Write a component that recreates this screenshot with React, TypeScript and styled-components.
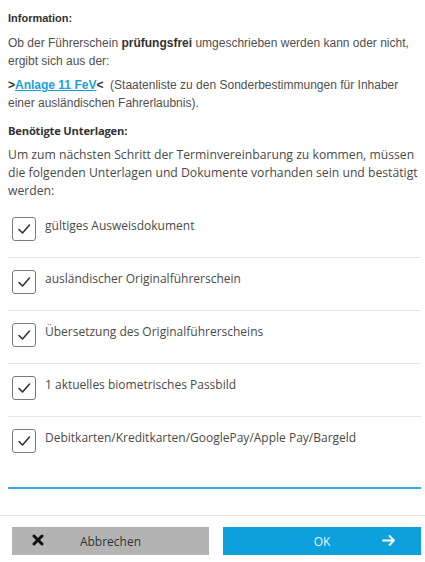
import React from 'react'
import styled, { createGlobalStyle } from 'styled-components'

const GlobalStyle = createGlobalStyle`
  body {
    margin: 0;
    background: #fff;
    color: #444;
  }
`

const Page = styled.div`
  width: 425px;
  height: 562px;
  display: flex;
  flex-direction: column;
  background: #fff;
`

const Content = styled.div`
  padding: 9px 4px 0 8px;
  flex: 1;
`

const InfoTitle = styled.div`
  font-family: "Liberation Sans", Arial, sans-serif;
  font-size: 11px;
  font-weight: bold;
  line-height: 18px;
  color: #333;
`

const InfoText = styled.p`
  font-family: "Liberation Sans", Arial, sans-serif;
  font-size: 12px;
  line-height: 18px;
  color: #505050;
  margin: ${p => p.$top}px 0 0;
  & b {
    color: #333;
  }
`

const LinkArrow = styled.b`
  color: #333;
`

const Link = styled.a`
  color: #1a9fe0;
  font-weight: bold;
  text-decoration: underline;
`

const SectionTitle = styled.div`
  font-family: "Open Sans", sans-serif;
  font-size: 11.2px;
  font-weight: 700;
  line-height: 18px;
  letter-spacing: -0.2px;
  color: #333;
  margin-top: 10px;
`

const SectionText = styled.p`
  font-family: "Open Sans", sans-serif;
  font-size: 12.2px;
  line-height: 18px;
  letter-spacing: 0;
  color: #4a4a4a;
  margin: 6px 0 0;
`

const List = styled.ul`
  list-style: none;
  margin: 5px 0 0;
  padding: 0;
`

const Row = styled.li`
  display: flex;
  align-items: flex-start;
  gap: 9px;
  padding: 12px 0 16px 4px;
  border-bottom: ${p => (p.$last ? 'none' : '1px solid #e6e6e6')};
`

const Box = styled.span`
  width: 22px;
  height: 22px;
  flex: none;
  border: 1px solid #7a7a7a;
  border-radius: 3px;
  display: flex;
  align-items: center;
  justify-content: center;
`

const Label = styled.span`
  font-family: "Open Sans", sans-serif;
  font-size: 12px;
  line-height: 18px;
  letter-spacing: 0;
  color: #4a4a4a;
`

const BlueLine = styled.div`
  height: 2px;
  background: #33aaea;
  margin-top: 18px;
`

const Footer = styled.div`
  border-top: 1px solid #e4e4e4;
  display: grid;
  grid-template-columns: 197px 198px;
  gap: 14px;
  padding: 11px 4px 7px 12px;
`

const Button = styled.button`
  height: 28px;
  border: none;
  border-radius: 0;
  background: ${p => (p.$primary ? '#0ca0dd' : '#b3b3b3')};
  color: ${p => (p.$primary ? '#e8f6fd' : '#333')};
  font-family: "Open Sans", sans-serif;
  font-size: 12px;
  position: relative;
  display: flex;
  align-items: center;
  justify-content: center;
  padding: 0;
`

const ButtonIcon = styled.span`
  position: absolute;
  top: 7px;
  ${p => (p.$right ? 'right: 25px;' : 'left: 20px;')}
  display: flex;
`

const Check = () => (
  <svg width="14" height="12" viewBox="0 0 14 12">
    <path d="M2 6.5 L5.5 10 L12.5 2" fill="none" stroke="#333" strokeWidth="1.6" strokeLinecap="round" strokeLinejoin="round" />
  </svg>
)

const items = [
  'gültiges Ausweisdokument',
  'ausländischer Originalführerschein',
  'Übersetzung des Originalführerscheins',
  '1 aktuelles biometrisches Passbild',
  'Debitkarten/Kreditkarten/GooglePay/Apple Pay/Bargeld',
]

export default function App() {
  return (
    <Page>
      <GlobalStyle />
      <Content>
        <InfoTitle>Information:</InfoTitle>
        <InfoText $top={7}>
          Ob der Führerschein <b>prüfungsfrei</b> umgeschrieben werden kann oder nicht, ergibt sich aus der:
        </InfoText>
        <InfoText $top={6}>
          <LinkArrow>&gt;</LinkArrow>
          <Link href="#">Anlage 11 FeV</Link>
          <LinkArrow>&lt;</LinkArrow>&nbsp; (Staatenliste zu den Sonderbestimmungen für Inhaber einer ausländischen Fahrerlaubnis).
        </InfoText>
        <SectionTitle>Benötigte Unterlagen:</SectionTitle>
        <SectionText>
          Um zum nächsten Schritt der Terminvereinbarung zu kommen, müssen die folgenden Unterlagen und Dokumente vorhanden sein und bestätigt werden:
        </SectionText>
        <List>
          {items.map((t, i) => (
            <Row key={t} $last={i === items.length - 1}>
              <Box>
                <Check />
              </Box>
              <Label>{t}</Label>
            </Row>
          ))}
        </List>
        <BlueLine />
      </Content>
      <Footer>
        <Button>
          <ButtonIcon>
            <svg width="12" height="12" viewBox="0 0 12 12">
              <path d="M2 2 L10 10 M10 2 L2 10" stroke="#111" strokeWidth="3" strokeLinecap="round" />
            </svg>
          </ButtonIcon>
          Abbrechen
        </Button>
        <Button $primary>
          OK
          <ButtonIcon $right>
            <svg width="14" height="13" viewBox="0 0 14 13">
              <path d="M1 6.5 H12 M7.5 2 L12 6.5 L7.5 11" fill="none" stroke="#fff" strokeWidth="1.8" strokeLinecap="round" strokeLinejoin="round" />
            </svg>
          </ButtonIcon>
        </Button>
      </Footer>
    </Page>
  )
}
